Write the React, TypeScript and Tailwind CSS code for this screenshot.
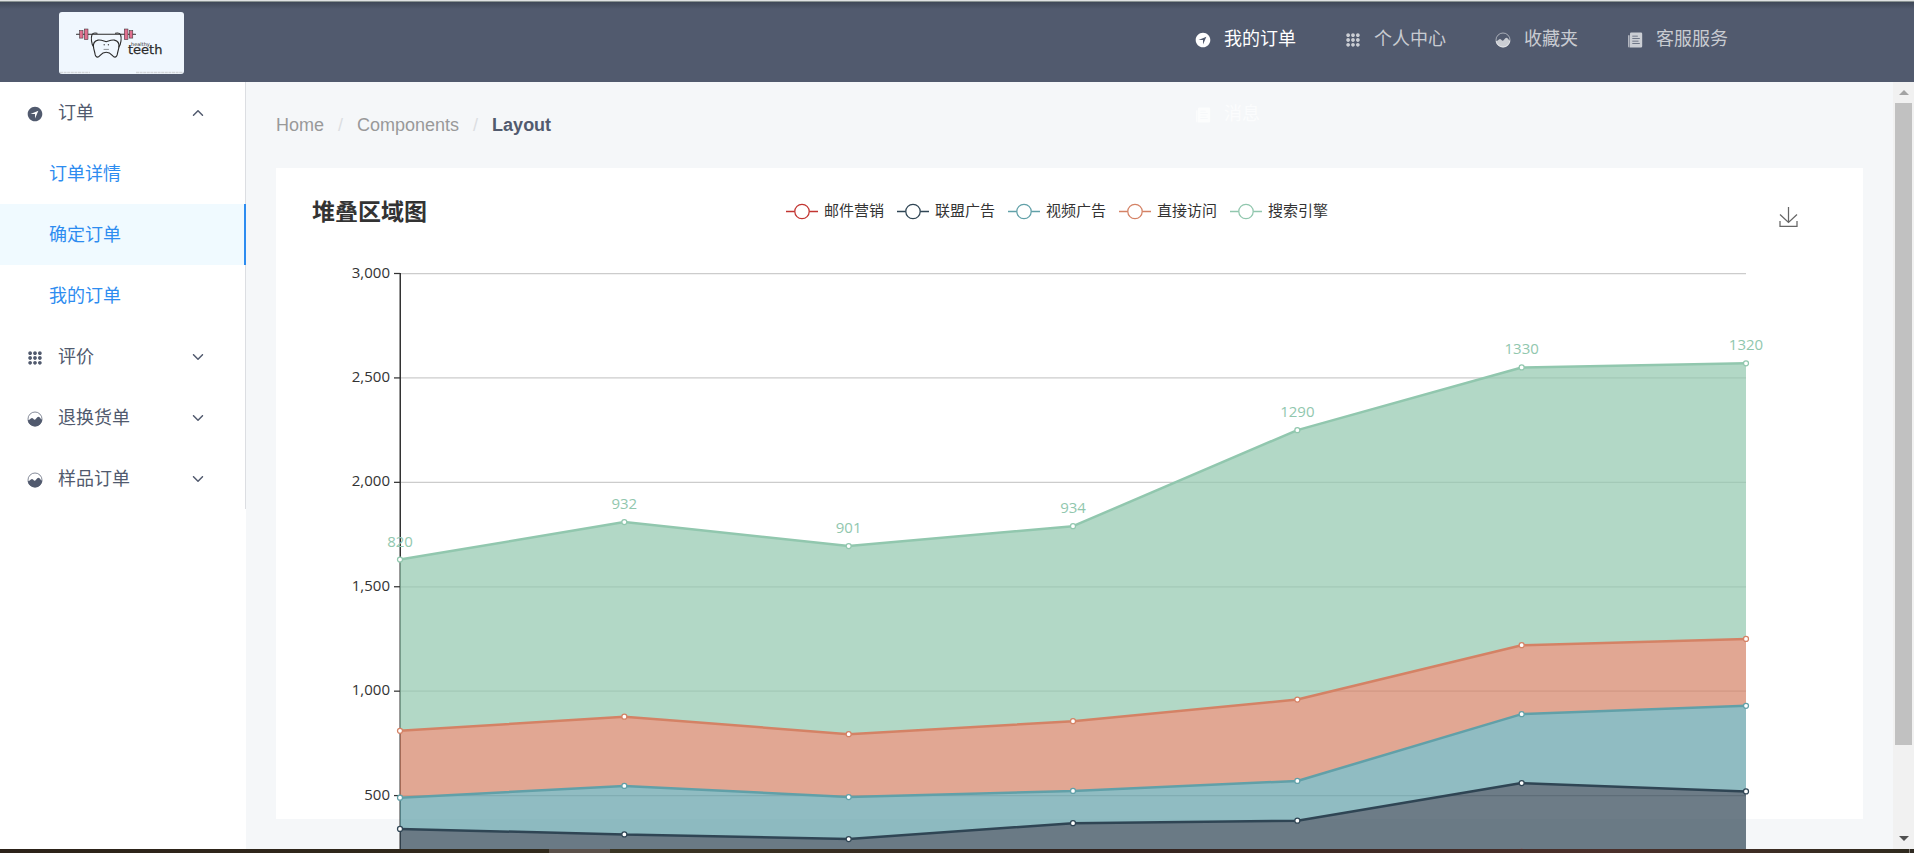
import { useLayoutEffect, useRef, useState } from 'react';
import type { ComponentType } from 'react';
import { IoIosArrowDown, IoIosArrowUp, IoIosKeypad, IoIosNavigate } from 'react-icons/io';

type Icon = ComponentType<{ className?: string }>;

function AnalyticsIcon({ className }: { className?: string }) {
  return (
    <svg viewBox="0 0 18 18" className={className} aria-hidden="true">
      <circle cx="9" cy="9" r="7" fill="none" stroke="currentColor" strokeWidth=".7" />
      <path
        d="M1.700 10.200C2.600 10.500 3.600 9.800 4.600 8.800C5.600 7.700 6.400 7.700 7.300 8.800C8.300 10 9.100 9.900 10 8.800L11.300 7.300C12.200 6.300 13 6.500 13.800 7.600C14.600 8.700 15.400 9.600 16.300 9.700A7.350 7.350 0 0 1 1.700 10.200Z"
        fill="currentColor"
      />
    </svg>
  );
}

function PaperIcon({ className }: { className?: string }) {
  return (
    <svg viewBox="0 0 18 18" className={className} fill="currentColor" aria-hidden="true">
      <path d="M2 4.200H3.600V16.500H3.300A1.300 1.300 0 0 1 2 15.200Z" opacity=".8" />
      <path
        fillRule="evenodd"
        d="M5.200 1.500H15A1.200 1.200 0 0 1 16.200 2.700V15.300A1.200 1.200 0 0 1 15 16.500H4V2.700A1.200 1.200 0 0 1 5.200 1.500ZM6.300 4.700V5.400H11.800V4.700ZM6.300 7.200V7.900H13.800V7.200ZM6.300 9.700V10.400H12.500V9.700ZM6.300 12.200V12.900H13.800V12.200Z"
      />
    </svg>
  );
}

const navItems: { label: string; icon: Icon; active?: boolean }[] = [
  { label: '我的订单', icon: IoIosNavigate, active: true },
  { label: '个人中心', icon: IoIosKeypad },
  { label: '收藏夹', icon: AnalyticsIcon },
  { label: '客服服务', icon: PaperIcon },
  { label: '消息', icon: PaperIcon },
];

const sideGroups: { label: string; icon: Icon; items?: string[] }[] = [
  { label: '订单', icon: IoIosNavigate, items: ['订单详情', '确定订单', '我的订单'] },
  { label: '评价', icon: IoIosKeypad },
  { label: '退换货单', icon: AnalyticsIcon },
  { label: '样品订单', icon: AnalyticsIcon },
];
const activeItem = '确定订单';

const series = [
  { name: '邮件营销', color: '#c23531', data: [120, 132, 101, 134, 90, 230, 210] },
  { name: '联盟广告', color: '#2f4554', data: [220, 182, 191, 234, 290, 330, 310] },
  { name: '视频广告', color: '#61a0a8', data: [150, 232, 201, 154, 190, 330, 410] },
  { name: '直接访问', color: '#d48265', data: [320, 332, 301, 334, 390, 330, 320] },
  { name: '搜索引擎', color: '#91c7ae', data: [820, 932, 901, 934, 1290, 1330, 1320] },
];

const ticks = [500, 1000, 1500, 2000, 2500, 3000];

function Logo() {
  return (
    <svg viewBox="0 0 125 62" className="h-[62px] w-[125px] rounded-[3px] bg-[#f0f7fe]" role="img" aria-label="healthy teeth">
      <g fill="none" stroke="#2b2b2b" strokeWidth="1.100" strokeLinecap="round" strokeLinejoin="round">
        <path d="M17.500 22.300H76.500" />
        <path d="M38 21.300c-2-.6-4.200 0-5 1.200-1.300 3.500-.6 9.500 1.600 12.500" />
        <path d="M56.500 21.300c2-.6 4.200 0 5 1.200 1.300 3.500.6 9.500-1.600 12.500" />
        <path d="M47.200 29.800c-3-1-5.700-2.200-8.200-1.700-3.500.8-5 3.500-4.500 7 .4 3 1.300 4.800 1.600 7.300.3 1.500.9 2.700 2.400 2.700 2.700 0 3-4.800 8.700-4.800s6 4.800 8.700 4.800c1.500 0 2.100-1.200 2.400-2.700.3-2.500 1.200-4.300 1.600-7.300.5-3.500-1-6.200-4.500-7-2.500-.5-5.200.7-8.200 1.700" />
        <path d="M45 37.400h4.500" strokeWidth=".5" />
      </g>
      <circle cx="45.200" cy="32.800" r=".7" fill="#444" />
      <circle cx="49.400" cy="32.800" r=".7" fill="#444" />
      <g fill="#e0708f" stroke="#2b2b2b" strokeWidth=".5">
        <rect x="20.500" y="18.500" width="3.500" height="7.600" />
        <rect x="25.300" y="17" width="3.700" height="10.600" />
        <rect x="65.300" y="17" width="3.700" height="10.600" />
        <rect x="70.300" y="18.500" width="3.500" height="7.600" />
      </g>
      <text x="72" y="34" fontSize="5" fill="#2b2b2b" fontFamily="'DejaVu Sans', sans-serif">healthy</text>
      <text x="69" y="42" fontSize="13" fill="#2b2b2b" stroke="#2b2b2b" strokeWidth=".25" fontFamily="'DejaVu Sans', sans-serif">teeth</text>
      <path d="M1 60.500H31M77 60.500H124" stroke="#d3d6da" strokeWidth="1.500" strokeDasharray="3 .6" />
    </svg>
  );
}

function Header() {
  return (
    <header className="relative z-10 flex h-[82px] shrink-0 items-start justify-between border-t border-[#dfe2e2] bg-[#515a6e] pr-[124px] pl-[59px]">
      <div aria-hidden="true" className="absolute inset-x-0 top-0 h-2 border-t border-[#8b9494] bg-linear-to-b from-[#3f4858] to-[#515a6e]" />
      <a href="#" className="mt-[11px]">
        <Logo />
      </a>
      <nav className="w-[620px]">
        <ul className="flex flex-wrap">
          {navItems.map(({ label, icon: NavIcon, active }) => (
            <li key={label}>
              <a
                href="#"
                className={`flex h-[75px] items-center gap-3 px-6 text-lg ${active ? 'text-white' : 'text-white/70'}`}
              >
                <NavIcon className="mt-[3px] size-[18px]" />
                {label}
              </a>
            </li>
          ))}
        </ul>
      </nav>
    </header>
  );
}

function Sidebar() {
  return (
    <aside className="w-[246px] shrink-0 bg-white">
      <ul className="border-r border-[#dcdee2] text-lg text-[#515a6e]">
        {sideGroups.map(({ label, icon: GroupIcon, items }) => (
          <li key={label}>
            <button type="button" aria-expanded={!!items} className="flex h-[61px] w-full items-center pr-[39px] pl-[26px] text-left">
              <GroupIcon className="mt-[3px] mr-[14px] size-[18px]" />
              <span className="flex-1">{label}</span>
              {items ? <IoIosArrowUp className="size-4" /> : <IoIosArrowDown className="size-4" />}
            </button>
            {items && (
              <ul>
                {items.map((item) => (
                  <li key={item}>
                    <a
                      href="#"
                      className={`-mr-px flex h-[61px] items-center border-r-2 pl-[49px] text-[#2d8cf0] ${
                        item === activeItem ? 'border-[#2d8cf0] bg-[#f0faff]' : 'border-transparent'
                      }`}
                    >
                      {item}
                    </a>
                  </li>
                ))}
              </ul>
            )}
          </li>
        ))}
      </ul>
    </aside>
  );
}

function AreaChart() {
  const ref = useRef<SVGSVGElement>(null);
  const [width, setWidth] = useState(1587);

  useLayoutEffect(() => {
    const el = ref.current;
    if (!el) return;
    const measure = () => setWidth(el.getBoundingClientRect().width);
    measure();
    const observer = new ResizeObserver(measure);
    observer.observe(el);
    return () => observer.disconnect();
  }, []);

  const left = 124;
  const right = width - 117;
  const top = 21.5;
  const bottom = 648;
  const x = (i: number) => left + ((right - left) * i) / 6;
  const y = (v: number) => bottom - ((bottom - top) * v) / 3000;

  const totals = series.map((_, s) =>
    series[0].data.map((_, i) => series.slice(0, s + 1).reduce((sum, item) => sum + item.data[i], 0)),
  );
  const points = (values: number[]) => values.map((v, i) => `${x(i)},${y(v)}`);

  return (
    <svg ref={ref} className="block h-[700px] w-full font-['Open_Sans','Noto_Sans_CJK_SC',sans-serif] text-[15px]" role="img" aria-label="堆叠区域图">
      {ticks.map((t) => (
        <g key={t}>
          <line x1={left} x2={right} y1={y(t)} y2={y(t)} stroke="#ccc" strokeWidth="1.25" />
          <line x1={left - 6} x2={left} y1={y(t)} y2={y(t)} stroke="#333" strokeWidth="1.25" />
          <text x={left - 10} y={y(t) + 4} textAnchor="end" fill="#333">
            {t.toLocaleString('en-US')}
          </text>
        </g>
      ))}
      <line x1={left + 0.25} x2={left + 0.25} y1={top - 0.5} y2={bottom} stroke="#333" strokeWidth="1.5" />
      {series.map((s, k) => {
        const base = k === 0 ? s.data.map(() => 0) : totals[k - 1];
        return (
          <polygon
            key={s.name}
            points={[...points(totals[k]), ...points(base).reverse()].join(' ')}
            fill={s.color}
            opacity="0.7"
          />
        );
      })}
      {series.map((s, k) => (
        <g key={s.name} stroke={s.color}>
          <polyline points={points(totals[k]).join(' ')} fill="none" strokeWidth="2.5" strokeLinejoin="bevel" />
          {totals[k].map((v, i) => (
            <circle key={i} cx={x(i)} cy={y(v)} r="2.5" fill="#fff" strokeWidth="1.25" />
          ))}
        </g>
      ))}
      {series[4].data.map((v, i) => (
        <text key={i} x={x(i)} y={y(totals[4][i]) - 13} textAnchor="middle" fill="#91c7ae" className="font-medium">
          {v}
        </text>
      ))}
    </svg>
  );
}

function ChartCard() {
  return (
    <section className="mt-[31px] h-[651px] bg-white">
      <div className="grid h-[84px] grid-cols-[1fr_auto_1fr] items-center pr-[61px] pl-9">
        <h1 className="mt-1 text-[23px] font-bold text-[#333]">堆叠区域图</h1>
        <ul className="mt-[2px] flex gap-[13px]">
          {series.map((s) => (
            <li key={s.name}>
              <button type="button" className="flex items-center gap-[6px] text-[15px] text-[#333]">
                <svg viewBox="0 0 32 18" className="h-[18px] w-8" fill="none" stroke={s.color} strokeWidth="1.250" aria-hidden="true">
                  <path d="M0 9.500H32" strokeWidth="1.500" />
                  <circle cx="16" cy="9.500" r="7.200" fill="#fff" />
                </svg>
                {s.name}
              </button>
            </li>
          ))}
        </ul>
        <button type="button" aria-label="下载" className="mt-[14px] justify-self-end p-1">
          <svg viewBox="0 0 19 20" className="h-5 w-[19px]" fill="none" stroke="#666" strokeWidth="1.250" aria-hidden="true">
            <path d="M9.500 0V15.500M1 7.500L9.500 15.500L18 7.500M1 14V19.300H18V14" />
          </svg>
        </button>
      </div>
      <AreaChart />
    </section>
  );
}

function Breadcrumb() {
  return (
    <nav aria-label="Breadcrumb" className="pt-[31px]">
      <ol className="flex gap-[14px] text-lg leading-6 text-[#999]">
        <li><a href="#">Home</a></li>
        <li aria-hidden="true" className="text-[#dcdee2]">/</li>
        <li><a href="#">Components</a></li>
        <li aria-hidden="true" className="text-[#dcdee2]">/</li>
        <li className="font-bold text-[#515a6e]">Layout</li>
      </ol>
    </nav>
  );
}

function Scrollbar() {
  return (
    <div aria-hidden="true" className="flex w-[21px] shrink-0 flex-col items-center bg-[#f1f1f1]">
      <div className="flex h-[21px] items-center">
        <svg viewBox="0 0 10 5" className="h-[5px] w-[10px]"><path d="M0 5L5 0L10 5Z" fill="#a3a3a3" /></svg>
      </div>
      <div className="flex flex-1 flex-col self-stretch px-[2px]">
        <div className="grow-[642] bg-[#c1c1c1]" />
        <div className="grow-[83]" />
      </div>
      <div className="flex h-[21px] items-center">
        <svg viewBox="0 0 10 5" className="h-[5px] w-[10px]"><path d="M0 0L5 5L10 0Z" fill="#505050" /></svg>
      </div>
    </div>
  );
}

export default function App() {
  return (
    <div className="flex h-screen flex-col overflow-hidden bg-[#f5f7f9] font-['Liberation_Sans','Noto_Sans_CJK_SC',sans-serif]">
      <Header />
      <div className="flex min-h-0 flex-1">
        <Sidebar />
        <main className="min-w-0 flex-1 overflow-hidden px-[30px]">
          <Breadcrumb />
          <ChartCard />
        </main>
        <Scrollbar />
      </div>
      <div aria-hidden="true" className="flex h-1 shrink-0 bg-linear-to-r from-[#2c2219] via-[#35301f] to-[#2f2a22]">
        <div className="ml-[549px] w-[61px] bg-[#5a504a]" />
        <div className="flex-1 bg-linear-to-r from-[#3a3524] via-[#33241f] to-[#4b302b]" />
        <div className="w-[300px] bg-linear-to-r from-[#4b302b] to-[#2f2a1e]" />
        <div className="mr-1 w-px bg-[#857e78]" />
      </div>
    </div>
  );
}
